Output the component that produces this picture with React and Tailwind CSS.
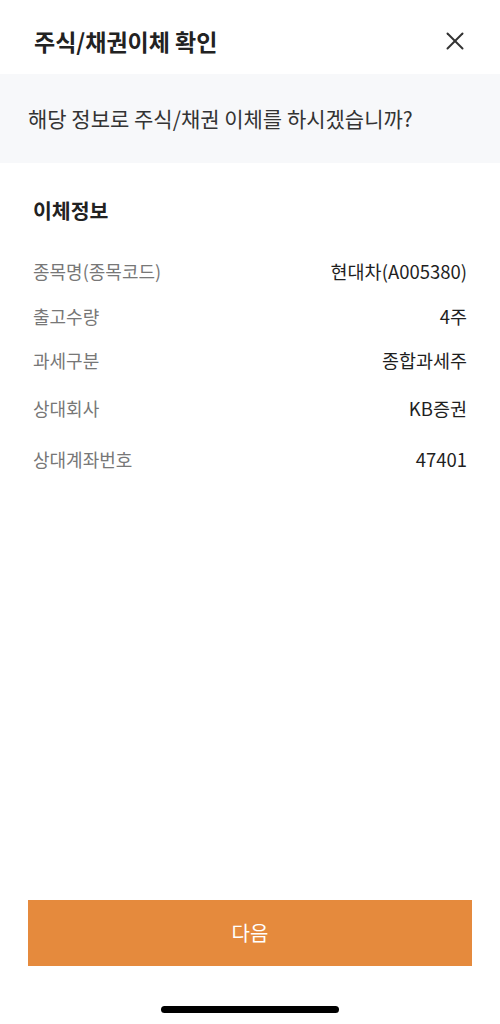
import { X } from "lucide-react";

const rows = [
  { label: "종목명(종목코드)", value: "현대차(A005380)", h: "h-[45px]" },
  { label: "출고수량", value: "4주", h: "h-[44px]" },
  { label: "과세구분", value: "종합과세주", h: "h-[48px]" },
  { label: "상대회사", value: "KB증권", h: "h-[51px]" },
  { label: "상대계좌번호", value: "47401", h: "h-[45px]" },
];

const InfoRow = ({ label, value, h }) => (
  <div className={`flex items-start justify-between ${h}`}>
    <span className="text-[18px] leading-[26px] text-[#777]">{label}</span>
    <span className="text-[18.5px] leading-[26px] text-[#1f1f1f]">{value}</span>
  </div>
);

export default function App() {
  return (
    <div
      className="relative h-[1024px] w-[500px] overflow-hidden bg-white flex flex-col"
      style={{ fontFamily: '"Noto Sans CJK KR", "Noto Sans", sans-serif' }}
    >
      <header className="flex h-[74px] items-center justify-between pl-[34px] pr-[30px] pt-[8px]">
        <h1 className="text-[23px] font-bold text-[#222]">주식/채권이체 확인</h1>
        <X className="h-[30px] w-[30px] text-[#333]" strokeWidth={1.6} />
      </header>

      <div className="flex h-[89px] items-center bg-[#f7f8fa] px-[28px]">
        <p className="text-[21px] text-[#333]">해당 정보로 주식/채권 이체를 하시겠습니까?</p>
      </div>

      <section className="px-[33px] pt-[32px]">
        <h2 className="text-[20.5px] font-bold leading-[30px] text-[#222]">이체정보</h2>
        <div className="mt-[33px] flex flex-col">
          {rows.map((r) => (
            <InfoRow key={r.label} {...r} />
          ))}
        </div>
      </section>

      <div className="mt-auto px-[28px] pb-[58px]">
        <button className="flex h-[66px] w-full items-center justify-center bg-[#e58a3d] text-[20px] text-white">
          다음
        </button>
      </div>

      <div className="absolute bottom-[11px] left-1/2 h-[7px] w-[178px] -translate-x-1/2 rounded-full bg-black" />
    </div>
  );
}
